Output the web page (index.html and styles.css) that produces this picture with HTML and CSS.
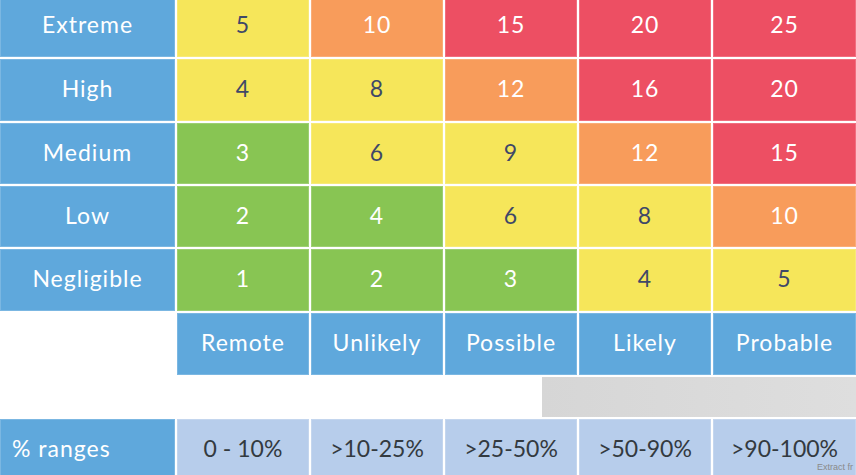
FILE: index.html
```html
<!DOCTYPE html>
<html>
<head>
<meta charset="utf-8">
<link rel="stylesheet" href="styles.css">
</head>
<body>
<div class="matrix">
  <div class="cell label">Extreme</div>
  <div class="cell yellow">5</div>
  <div class="cell orange">10</div>
  <div class="cell red">15</div>
  <div class="cell red">20</div>
  <div class="cell red">25</div>

  <div class="cell label">High</div>
  <div class="cell yellow">4</div>
  <div class="cell yellow">8</div>
  <div class="cell orange">12</div>
  <div class="cell red">16</div>
  <div class="cell red">20</div>

  <div class="cell label">Medium</div>
  <div class="cell green">3</div>
  <div class="cell yellow">6</div>
  <div class="cell yellow">9</div>
  <div class="cell orange">12</div>
  <div class="cell red">15</div>

  <div class="cell label">Low</div>
  <div class="cell green">2</div>
  <div class="cell green">4</div>
  <div class="cell yellow">6</div>
  <div class="cell yellow">8</div>
  <div class="cell orange">10</div>

  <div class="cell label">Negligible</div>
  <div class="cell green">1</div>
  <div class="cell green">2</div>
  <div class="cell green">3</div>
  <div class="cell yellow">4</div>
  <div class="cell yellow">5</div>

  <div class="cell blank"></div>
  <div class="cell label">Remote</div>
  <div class="cell label">Unlikely</div>
  <div class="cell label">Possible</div>
  <div class="cell label">Likely</div>
  <div class="cell label">Probable</div>

  <div class="band"><div class="graybox"></div></div>

  <div class="cell label left">% ranges</div>
  <div class="cell range">0 - 10%</div>
  <div class="cell range">&gt;10-25%</div>
  <div class="cell range">&gt;25-50%</div>
  <div class="cell range">&gt;50-90%</div>
  <div class="cell range">&gt;90-100%</div>
</div>
<div class="credit">Extract fr</div>
</body>
</html>
```

FILE: styles.css
```css
html, body {
  margin: 0;
  padding: 0;
  background: #ffffff;
  overflow: hidden;
  width: 856px;
  height: 475px;
}

body {
  position: relative;
  font-family: "Lato", "DejaVu Sans", sans-serif;
}

.matrix {
  display: grid;
  grid-template-columns: 175px repeat(4, 132px) 1fr;
  grid-template-rows: 62px 62px 61px 61px 62px 62px 40px 62px;
  gap: 2px;
  margin-top: -5px;
}

.cell {
  display: flex;
  align-items: center;
  justify-content: center;
  padding-bottom: 4px;
  font-size: 23px;
  letter-spacing: 1px;
  color: #ffffff;
  box-shadow: inset 0 0 0 1px rgba(255, 255, 255, 0.18);
}

.label {
  background: #5fa8dc;
  color: #ffffff;
}

.label.left {
  justify-content: flex-start;
  padding-left: 12px;
}

.blank {
  background: #ffffff;
  box-shadow: none;
}

.yellow {
  background: #f6e65a;
  color: #3f4868;
}

.orange {
  background: #f89c5b;
}

.red {
  background: #ed4f63;
}

.green {
  background: #88c553;
}

.range {
  background: #b7cdeb;
  color: #333a40;
  letter-spacing: 0;
}

.band {
  grid-column: 1 / -1;
  display: flex;
  justify-content: flex-end;
}

.graybox {
  width: 314px;
  background: linear-gradient(90deg, #d6d6d6, #dedede);
}

.credit {
  position: absolute;
  left: 817px;
  top: 462px;
  font-family: "Liberation Sans", Arial, sans-serif;
  font-size: 9px;
  color: #8a8a8a;
  white-space: nowrap;
}
```
